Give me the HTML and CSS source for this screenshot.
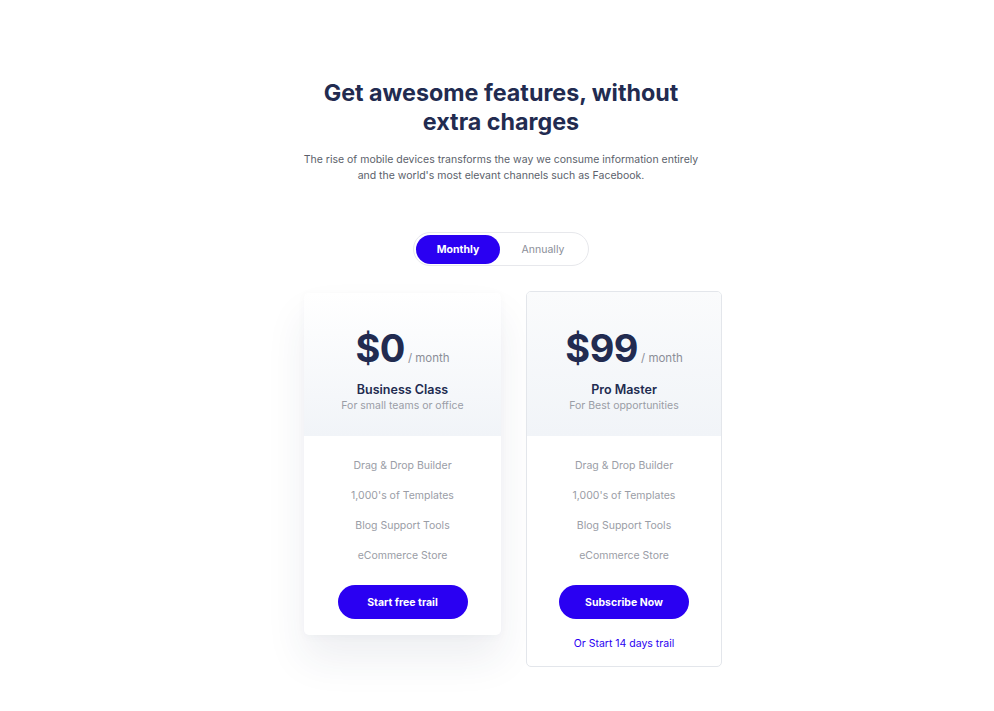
FILE: index.html
```html
<!DOCTYPE html>
<html lang="en">
<head>
<meta charset="utf-8">
<title>Pricing</title>
<link rel="stylesheet" href="styles.css">
</head>
<body>
<section class="pricing">
  <h1 class="title">Get awesome features, without<br>extra charges</h1>
  <p class="lead">The rise of mobile devices transforms the way we consume information entirely<br>and the world's most elevant channels such as Facebook.</p>
  <div class="toggle">
    <span class="toggle-opt active">Monthly</span>
    <span class="toggle-opt">Annually</span>
  </div>
  <div class="cards">
    <div class="card card-shadow">
      <div class="card-head">
        <div class="price"><span class="amount">$0</span><span class="per">/ month</span></div>
        <div class="plan">Business Class</div>
        <div class="plan-sub">For small teams or office</div>
      </div>
      <ul class="features">
        <li>Drag &amp; Drop Builder</li>
        <li>1,000's of Templates</li>
        <li>Blog Support Tools</li>
        <li>eCommerce Store</li>
      </ul>
      <div class="card-foot"><a class="btn" href="#">Start free trail</a></div>
    </div>
    <div class="card card-border">
      <div class="card-head">
        <div class="price"><span class="amount">$99</span><span class="per">/ month</span></div>
        <div class="plan">Pro Master</div>
        <div class="plan-sub">For Best opportunities</div>
      </div>
      <ul class="features">
        <li>Drag &amp; Drop Builder</li>
        <li>1,000's of Templates</li>
        <li>Blog Support Tools</li>
        <li>eCommerce Store</li>
      </ul>
      <div class="card-foot"><a class="btn" href="#">Subscribe Now</a><a class="trial" href="#">Or Start 14 days trail</a></div>
    </div>
  </div>
</section>
</body>
</html>
```

FILE: styles.css
```css
* { box-sizing: border-box; }
html, body { margin: 0; padding: 0; background: #ffffff; }
body { font-family: "Inter", "Open Sans", sans-serif; color: #222b50; }

.pricing {
  display: flex;
  flex-direction: column;
  align-items: center;
  padding: 78px 0 40px 8px;
}

.title {
  margin: 0;
  font-size: 23.3px;
  line-height: 29px;
  font-weight: 700;
  text-align: center;
  color: #222b50;
}

.lead {
  margin: 16px 0 0;
  font-size: 10.5px;
  line-height: 16px;
  color: #5b5f6b;
  text-align: center;
}

.toggle {
  margin-top: 48px;
  display: flex;
  align-items: center;
  width: 176px;
  height: 34px;
  padding: 2px;
  border: 1px solid #e7e8ec;
  border-radius: 17px;
}
.toggle-opt {
  flex: 1;
  height: 29px;
  display: flex;
  align-items: center;
  justify-content: center;
  font-size: 10.5px;
  color: #8b8e98;
  border-radius: 15px;
}
.toggle-opt.active {
  flex: 0 0 84px;
  background: #2a00f2;
  color: #ffffff;
  font-weight: 700;
}

.cards {
  margin-top: 25px;
  display: flex;
  align-items: flex-start;
  gap: 25px;
  padding-left: 24px;
}

.card {
  width: 197px;
  background: #ffffff;
  border-radius: 5px;
  overflow: hidden;
}
.card-shadow {
  margin-top: 2px;
  box-shadow: 0 24px 40px rgba(40, 55, 90, 0.08), 0 2px 8px rgba(40, 55, 90, 0.03);
}
.card-border {
  width: 196px;
  border: 1px solid #e3e6eb;
}

.card-head {
  height: 143px;
  padding-top: 33px;
  text-align: center;
  background: linear-gradient(180deg, #ffffff 0%, #f1f4f8 100%);
}
.card-border .card-head {
  height: 144px;
  padding-top: 34px;
  background: linear-gradient(180deg, #fafbfc 0%, #f1f4f8 100%);
}

.price {
  display: flex;
  align-items: baseline;
  justify-content: center;
  line-height: 44px;
}
.amount {
  font-size: 38px;
  font-weight: 700;
  color: #222b50;
  letter-spacing: -0.5px;
}
.per {
  margin-left: 3px;
  font-size: 11.5px;
  color: #8b8e98;
}

.plan {
  margin-top: 1px;
  font-size: 12.5px;
  line-height: 18px;
  font-weight: 600;
  color: #222b50;
}
.plan-sub {
  font-size: 10.5px;
  line-height: 14px;
  color: #9a9da6;
}

.features {
  list-style: none;
  margin: 0;
  padding: 15px 0 0;
  text-align: center;
}
.features li {
  font-size: 10.5px;
  line-height: 30px;
  color: #9a9da6;
}

.card-foot {
  display: flex;
  flex-direction: column;
  align-items: center;
  padding: 14px 0 16px;
}
.btn {
  width: 130px;
  height: 34px;
  border-radius: 17px;
  background: #2a00f2;
  color: #ffffff;
  font-size: 10.5px;
  font-weight: 700;
  display: flex;
  align-items: center;
  justify-content: center;
  text-decoration: none;
}
.trial {
  margin-top: 18px;
  font-size: 10.5px;
  line-height: 14px;
  color: #2a00f2;
  text-decoration: none;
}
.card-border .card-foot {
  padding-bottom: 15px;
}
```
